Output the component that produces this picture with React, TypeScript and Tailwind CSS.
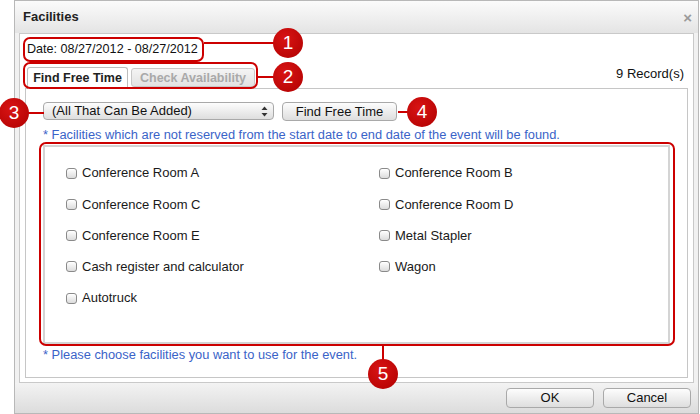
import React from "react";

const facilities = [
  "Conference Room A",
  "Conference Room B",
  "Conference Room C",
  "Conference Room D",
  "Conference Room E",
  "Metal Stapler",
  "Cash register and calculator",
  "Wagon",
  "Autotruck",
];

function Badge({ n, x, y }: { n: number; x: number; y: number }) {
  return (
    <div
      className="absolute w-[30px] h-[30px] rounded-full bg-[radial-gradient(circle_at_40%_35%,#d81414,#b00000)] text-white text-[19px] leading-[30px] text-center"
      style={{ left: x - 15, top: y - 15 }}
    >
      {n}
    </div>
  );
}

function Checkbox() {
  return (
    <span className="inline-block w-[11px] h-[11px] rounded-[3px] border border-[#8a8a8a] bg-gradient-to-b from-white to-[#dcdcdc] shadow-[inset_0_1px_0_#fff]" />
  );
}

export default function App() {
  return (
    <div className="relative w-[700px] h-[414px] bg-white overflow-hidden font-['Liberation_Sans',Arial,sans-serif] text-[13px] text-[#222]">
      {/* dialog */}
      <div className="ml-[14px] w-[685px] h-[414px] border border-[#b8b8b8] bg-[#f1f1f1] flex flex-col">
        <div className="h-[32px] shrink-0 flex items-center justify-between px-[8px] bg-gradient-to-b from-[#fbfbfb] to-[#e4e4e4]">
          <span className="font-bold text-[13px] text-[#222]">Facilities</span>
          <span className="text-[#9a9a9a] text-[15px] font-bold leading-none mr-[-2px]">×</span>
        </div>
        <div className="mx-[4px] h-[350px] shrink-0 bg-white border border-[#c9c9c9] px-[5px] pt-[7px] flex flex-col">
          <div className="h-[16px] leading-[16px] pl-[2px] text-[12.6px] text-[#111]">
            Date: 08/27/2012 - 08/27/2012
          </div>
          <div className="mt-[7px] flex items-end justify-between border-b border-[#c6c6c6]">
            <div className="flex items-end gap-[3px] pl-[2px]">
              <div className="h-[22px] w-[101px] text-center mb-[-1px] bg-white border border-b-0 border-[#bdbdbd] rounded-t-[3px] font-bold text-[12.5px] leading-[21px] text-[#222]">
                Find Free Time
              </div>
              <div className="h-[19px] w-[124px] text-center mb-[1px] bg-gradient-to-b from-[#f4f4f4] to-[#e2e2e2] border border-[#c8c8c8] rounded-[3px] font-bold text-[12.5px] leading-[18px] text-[#a9a9a9]">
                Check Availability
              </div>
            </div>
            <div className="mb-[4px] mr-[4px] text-[13px] text-[#111]">9 Record(s)</div>
          </div>
          <div className="flex-1 mb-[4px] border-x border-b border-[#c6c6c6] pl-[17px] pt-[13px]">
            <div className="flex items-center gap-[8px]">
              <div className="relative w-[231px] h-[18px] rounded-[4px] border border-[#a9a9a9] bg-gradient-to-b from-[#fdfdfd] to-[#dedede] pl-[8px] leading-[16px] text-[13px] text-[#111]">
                (All That Can Be Added)
                <svg className="absolute right-[5px] top-[3px]" width="7" height="11" viewBox="0 0 7 11">
                  <path d="M3.5 0.5 L6.5 4 L0.5 4 Z" fill="#333" />
                  <path d="M3.5 10.5 L6.5 7 L0.5 7 Z" fill="#333" />
                </svg>
              </div>
              <button className="w-[115px] h-[19px] rounded-[4px] border border-[#a9a9a9] bg-gradient-to-b from-[#fdfdfd] to-[#dedede] text-[13px] leading-[17px] text-[#111]">
                Find Free Time
              </button>
            </div>
            <div className="mt-[6px] h-[15px] leading-[15px] text-[12.85px] text-[#3a63c8]">
              * Facilities which are not reserved from the start date to end date of the event will be found.
            </div>
            <div className="mt-[3px] w-[627px] h-[199px] border-2 border-[#d4d4d4] bg-white pl-[21px] pt-[11px]">
              <div className="grid grid-cols-[313px_1fr]">
                {facilities.map((f) => (
                  <label key={f} className="h-[31.25px] flex items-center gap-[5px] text-[13px] text-[#1a1a1a]">
                    <Checkbox />
                    {f}
                  </label>
                ))}
              </div>
            </div>
            <div className="mt-[3px] h-[15px] leading-[15px] text-[12.85px] text-[#3a63c8]">
              * Please choose facilities you want to use for the event.
            </div>
          </div>
        </div>
        <div className="flex-1 flex items-center justify-end gap-[9px] pr-[7px] bg-gradient-to-b from-[#f3f3f3] to-[#dcdcdc]">
          <button className="w-[88px] h-[20px] rounded-[4px] border border-[#a9a9a9] bg-gradient-to-b from-[#fdfdfd] to-[#dedede] text-[13px] leading-[18px] text-[#111]">
            OK
          </button>
          <button className="w-[88px] h-[20px] rounded-[4px] border border-[#a9a9a9] bg-gradient-to-b from-[#fdfdfd] to-[#dedede] text-[13px] leading-[18px] text-[#111]">
            Cancel
          </button>
        </div>
      </div>

      {/* annotations */}
      <div className="absolute left-[23px] top-[37px] w-[181px] h-[25px] border-2 border-[#cc0000] rounded-[7px]" />
      <div className="absolute left-[204px] top-[42px] w-[72px] h-[2px] bg-[#cc0000]" />
      <Badge n={1} x={288} y={43} />

      <div className="absolute left-[23px] top-[62px] w-[235px] h-[27px] border-2 border-[#cc0000] rounded-[7px]" />
      <div className="absolute left-[258px] top-[76px] w-[18px] h-[2px] bg-[#cc0000]" />
      <Badge n={2} x={288} y={77} />

      <div className="absolute left-[26px] top-[112px] w-[18px] h-[2px] bg-[#cc0000]" />
      <Badge n={3} x={14} y={113} />

      <div className="absolute left-[398px] top-[111px] w-[12px] h-[2px] bg-[#cc0000]" />
      <Badge n={4} x={422} y={112} />

      <div className="absolute left-[39px] top-[142px] w-[636px] h-[204px] border-2 border-[#cc0000] rounded-[7px]" />
      <div className="absolute left-[382px] top-[345px] w-[2px] h-[16px] bg-[#cc0000]" />
      <Badge n={5} x={383} y={374} />
    </div>
  );
}
